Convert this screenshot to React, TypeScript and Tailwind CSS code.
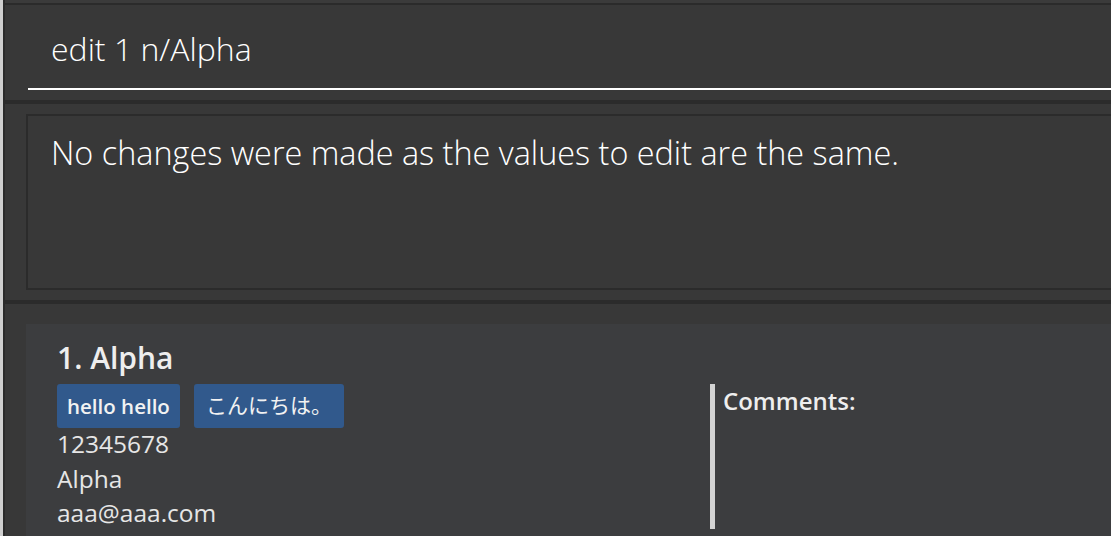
import React from 'react'

const sans = "font-['Open_Sans','Noto_Sans_CJK_JP',sans-serif]"

function CommandBox() {
    return (
        <div className="h-[95px] bg-[#383838] pl-[23px] pt-[24px]">
            <div className="h-[61px] border-b-2 border-white pl-[23px]">
                <p className="text-[32px] leading-[40px] font-light text-white">edit 1 n/Alpha</p>
            </div>
        </div>
    )
}

function ResultBox() {
    return (
        <div className="h-[196px] bg-[#383838] pl-[21px] pt-[10px]">
            <div className="h-[176px] border-2 border-r-0 border-[#2b2b2b] pl-[23px] pt-[16px]">
                <p className="whitespace-nowrap text-[32.4px] leading-[40px] font-light text-white">
                    No changes were made as the values to edit are the same.
                </p>
            </div>
        </div>
    )
}

function PersonCard() {
    return (
        <div className="flex-1 bg-[#383838] pl-[21px] pt-[20px]">
            <div className="flex h-full bg-[#3c3d3f] pl-[31px] pt-[16px]">
                <div className="w-[653px] shrink-0">
                    <p className="text-[30px] leading-[36px] font-semibold text-[#eeeeee]">1. Alpha</p>
                    <div className="mt-[8px] flex gap-[14px]">
                        <span className="flex h-[44px] items-center rounded-[3px] bg-[#31598c] px-[10px] text-[20.5px] font-semibold text-[#f2f2f2]">
                            hello hello
                        </span>
                        <span className="flex h-[44px] items-center rounded-[3px] bg-[#31598c] px-[12px] text-[21px] text-[#f2f2f2]">
                            こんにちは。
                        </span>
                    </div>
                    <div className="-mt-[1px] text-[24.5px] leading-[34.5px] text-[#e6e6e6]">
                        <p>12345678</p>
                        <p>Alpha</p>
                        <p>aaa@aaa.com</p>
                    </div>
                </div>
                <div className="mt-[44px] flex h-[145px] border-l-[5px] border-[#d3d3d3] pl-[8px]">
                    <p className="-mt-[1px] text-[24px] leading-[36px] font-semibold text-[#eeeeee]">Comments:</p>
                </div>
            </div>
        </div>
    )
}

export default function App() {
    return (
        <div className={`flex h-[536px] w-[1111px] overflow-hidden bg-[#383838] ${sans}`}>
            <div className="w-[3px] shrink-0 bg-[#cfcfcf]" />
            <div className="flex min-w-0 flex-1 flex-col border-l-2 border-[#2b2b2b]">
                <div className="h-[5px] shrink-0 border-b-2 border-[#2b2b2b] bg-[#3b3b3b]" />
                <CommandBox />
                <div className="h-[4px] shrink-0 bg-[#2b2b2b]" />
                <ResultBox />
                <div className="h-[4px] shrink-0 bg-[#2b2b2b]" />
                <PersonCard />
            </div>
        </div>
    )
}
